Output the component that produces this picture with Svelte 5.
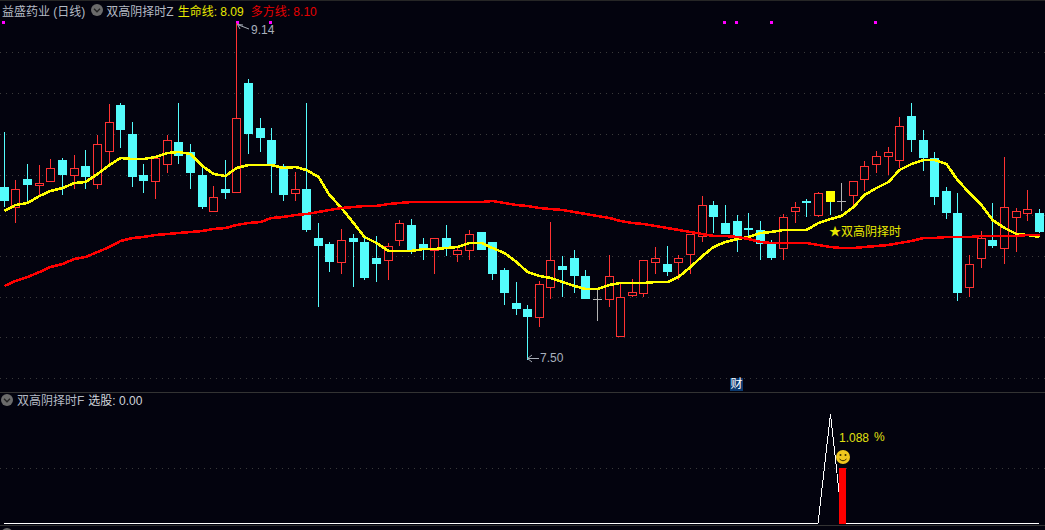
<script lang="ts">
  // type, high, body top, body bottom, low
  const candles: [string, number, number, number, number][] = [
    ['c', 132, 187, 201, 207], ['r', 180, 189, 208, 223], ['c', 164, 179, 185, 201], ['r', 165, 183, 186, 196],
    ['r', 159, 168, 182, 182], ['c', 158, 160, 175, 195], ['r', 155, 168, 176, 189], ['c', 150, 166, 177, 189],
    ['r', 135, 144, 185, 189], ['r', 104, 122, 152, 165], ['c', 103, 105, 130, 148], ['c', 122, 134, 177, 187],
    ['c', 164, 175, 181, 193], ['r', 157, 158, 182, 199], ['r', 135, 140, 165, 173], ['c', 103, 142, 156, 164],
    ['c', 144, 152, 173, 189], ['c', 167, 175, 207, 209], ['r', 186, 197, 212, 212], ['c', 160, 189, 193, 199],
    ['r', 23, 118, 193, 193], ['c', 79, 83, 134, 154], ['c', 118, 128, 138, 152], ['c', 128, 140, 164, 193],
    ['c', 164, 166, 195, 201], ['r', 172, 189, 194, 201], ['c', 103, 189, 230, 232], ['c', 223, 238, 246, 307],
    ['c', 242, 244, 262, 272], ['r', 229, 240, 263, 274], ['c', 234, 238, 242, 287], ['c', 236, 242, 278, 280],
    ['c', 236, 258, 264, 282], ['r', 243, 246, 261, 280], ['r', 220, 223, 241, 246], ['c', 219, 225, 250, 254],
    ['c', 238, 244, 248, 260], ['r', 238, 238, 251, 274], ['c', 225, 238, 248, 256], ['r', 246, 250, 255, 262],
    ['r', 230, 234, 251, 260], ['c', 232, 232, 250, 250], ['c', 242, 242, 274, 280], ['c', 268, 270, 293, 305],
    ['c', 282, 303, 309, 315], ['c', 305, 309, 317, 360], ['r', 281, 284, 318, 327], ['r', 222, 260, 288, 299],
    ['c', 256, 266, 270, 297], ['c', 250, 258, 276, 293], ['c', 270, 276, 299, 299], ['w', 290, 299, 300, 321],
    ['r', 255, 276, 300, 307], ['r', 283, 297, 337, 337], ['r', 279, 292, 296, 297], ['r', 260, 260, 294, 297],
    ['r', 247, 258, 263, 274], ['c', 246, 264, 272, 276], ['r', 255, 258, 263, 280], ['r', 234, 234, 255, 274],
    ['r', 196, 205, 237, 242], ['c', 201, 205, 217, 233], ['c', 205, 223, 234, 234], ['c', 215, 221, 236, 252],
    ['c', 213, 228, 230, 240], ['c', 221, 230, 244, 260], ['c', 240, 244, 258, 260], ['r', 214, 217, 249, 260],
    ['r', 202, 207, 212, 223], ['c', 199, 201, 203, 217], ['r', 192, 193, 216, 217], ['y', 191, 191, 202, 215],
    ['w', 183, 201, 202, 211], ['r', 181, 181, 196, 205], ['r', 161, 166, 180, 191], ['r', 151, 156, 165, 173],
    ['r', 147, 152, 157, 175], ['r', 117, 126, 161, 168], ['c', 103, 116, 140, 152], ['c', 130, 140, 158, 171],
    ['c', 152, 158, 197, 205], ['c', 187, 191, 213, 219], ['c', 193, 213, 293, 301], ['r', 255, 264, 288, 297],
    ['r', 231, 238, 259, 268], ['c', 203, 240, 246, 248], ['r', 157, 207, 249, 264], ['r', 208, 211, 218, 252],
    ['r', 190, 209, 214, 221], ['c', 209, 213, 232, 233]
  ];

  const lifeLine = [
    211, 205, 203, 196, 191, 188, 183, 182, 174, 165, 158, 159, 159, 157, 153, 152, 154, 166, 174, 176,
    168, 165, 165, 165, 168, 167, 170, 177, 195, 208, 223, 237, 243, 251, 251, 251, 249, 249, 248, 247,
    243, 243, 248, 253, 262, 272, 276, 278, 282, 286, 289, 289, 285, 283, 283, 283, 282, 282, 277, 267,
    256, 247, 242, 239, 237, 233, 232, 230, 230, 230, 223, 219, 216, 207, 195, 188, 182, 170, 164, 160,
    160, 164, 180, 193, 205, 220, 228, 234, 235, 237
  ];

  const trendLine = [
    286, 281, 277, 272, 267, 264, 259, 257, 252, 247, 241, 238, 237, 235, 234, 233, 232, 231, 229, 228,
    225, 223, 222, 218, 217, 215, 214, 212, 210, 208, 207, 206, 206, 204, 203, 202, 202, 202, 202, 202,
    202, 202, 201, 203, 205, 206, 208, 209, 210, 212, 214, 216, 218, 221, 223, 224, 226, 228, 230, 232,
    234, 236, 236, 237, 239, 242, 243, 243, 243, 243, 245, 247, 248, 248, 247, 246, 245, 243, 241, 238,
    238, 237, 237, 237, 236, 236, 236, 236, 235, 235
  ];

  const mainGrid = [52, 93, 134, 175, 215, 256, 297, 337, 378];
  const signals = [3, 237, 270, 724, 736, 771, 875];

  const xAt = (i: number) => Math.floor(4.33 + 11.63 * i);
  const toPoints = (ys: number[]) => ys.map((y, i) => `${xAt(i) + 0.5},${y}`).join(' ');
</script>

{#snippet toggle()}
  <svg class="toggle" viewBox="0 0 12 12" width="12" height="12">
    <circle cx="6" cy="6" r="6" fill="#6b6b6b" />
    <path d="M3 4.8 6 7.8 9 4.8" fill="none" stroke="#222" stroke-width="1.3" />
  </svg>
{/snippet}

<div class="page">
  <section class="pane main">
    <svg class="canvas" viewBox="0 0 1045 392" width="1045" height="392">
      <g shape-rendering="crispEdges">
        {#each mainGrid as y}
          <line class="grid" x1="0" x2="1045" y1={y + 0.5} y2={y + 0.5} />
        {/each}
        {#each signals as x}
          <rect x={x - 1} y="21" width="3" height="3" fill="#ff00ff" />
        {/each}
        {#each candles as [kind, high, top, bottom, low], i}
          {@const x = xAt(i)}
          <g class={kind}>
            <line class="wick" x1={x + 0.5} x2={x + 0.5} y1={high} y2={top} />
            <line class="wick" x1={x + 0.5} x2={x + 0.5} y1={bottom} y2={low} />
            {#if kind === 'r'}
              <rect class="body" x={x - 3.5} y={top + 0.5} width="8" height={bottom - top - 1} />
            {:else if kind === 'w'}
              <line class="wick" x1={x - 4} x2={x + 5} y1={top + 0.5} y2={top + 0.5} />
              <line class="wick" x1={x + 0.5} x2={x + 0.5} y1={high} y2={low} />
            {:else}
              <rect class="body" x={x - 4} y={top} width="9" height={bottom - top} />
            {/if}
          </g>
        {/each}
      </g>
      <polyline class="life" points={toPoints(lifeLine)} shape-rendering="crispEdges" />
      <polyline class="trend" points={toPoints(trendLine)} shape-rendering="crispEdges" />

      <path class="arrow" d="M237.5 24.5 249 29M237.5 24.5 243 25M237.5 24.5 240 29" />
      <text class="price" x="251" y="34">9.14</text>
      <path class="arrow" d="M527.5 358.5H539M527.5 358.5 532 355M527.5 358.5 532 362" />
      <text class="price" x="540" y="362">7.50</text>
      <text class="signal" x="829" y="236">★双高阴择时</text>
    </svg>

    <div class="legend">
      <span class="title">益盛药业 (日线)</span>
      {@render toggle()}
      <span class="name">双高阴择时Z</span>
      <span class="yellow">生命线: 8.09</span>
      <span class="red">多方线: 8.10</span>
    </div>
    <span class="badge">财</span>
  </section>

  <section class="pane sub">
    <svg class="canvas" viewBox="0 393 1045 132" width="1045" height="132">
      <line class="grid" x1="0" x2="1045" y1="468.5" y2="468.5" shape-rendering="crispEdges" />
      <polyline class="volume" points="4,523.5 818,523.5 830.5,414 842.5,523.5 1039,523.5" shape-rendering="crispEdges" />
      <rect x="839" y="468" width="7" height="56" fill="#ff0000" />
      <text class="gain" x="839" y="442">1.088</text>
      <text class="gain" x="874" y="441">%</text>
      <circle cx="843" cy="457" r="7" fill="#f0c71e" />
      <circle cx="840.5" cy="455" r="1" fill="#3a2c00" />
      <circle cx="845.5" cy="455" r="1" fill="#3a2c00" />
      <path d="M839.5 459q3.5 3.5 7 0" fill="none" stroke="#3a2c00" stroke-width="1" />
    </svg>

    <div class="legend sub-legend">
      {@render toggle()}
      <span class="name">双高阴择时F</span>
      <span class="light">选股: 0.00</span>
    </div>
  </section>

  <section class="tail">
    {@render toggle()}
    <span class="name">MACD(12,26,9)</span>
    <span class="white">DIF: 0.01</span>
    <span class="yellow">DEA: 0.03</span>
    <span class="magenta">MACD: 0.03</span>
  </section>
</div>

<style>
  :global(body) {
    margin: 0;
    background: #03030e;
  }

  .page {
    display: flex;
    flex-direction: column;
    width: 1045px;
    height: 530px;
    overflow: hidden;
    background: #03030e;
    font-family: "Liberation Sans", "Noto Sans CJK SC", sans-serif;
    font-size: 12px;
    color: #b4bac4;
  }

  .pane {
    position: relative;
    flex: none;
    border-bottom: 1px solid #333;
  }

  .main {
    height: 392px;
    box-shadow: inset 0 1px #262626;
  }

  .sub {
    height: 132px;
  }

  .canvas {
    position: absolute;
    left: 0;
    top: 0;
    display: block;
  }

  .legend {
    position: relative;
    display: flex;
    align-items: center;
    height: 20px;
    padding-left: 2px;
    white-space: nowrap;
  }

  .toggle {
    flex: none;
    margin: 0 3px 0 6px;
  }

  .yellow {
    margin-left: 4px;
    color: #e8e800;
  }

  .red {
    margin-left: 7px;
    color: #e60000;
  }

  .sub-legend {
    height: 13px;
    padding-left: 0;
  }

  .sub-legend .toggle {
    margin: 0 4px 0 1px;
  }

  .light {
    margin-left: 4px;
    color: #d0d4da;
  }

  .badge {
    position: absolute;
    left: 730px;
    top: 378px;
    width: 13px;
    height: 13px;
    line-height: 13px;
    text-align: center;
    background: #0b3a70;
    color: #fff;
  }

  .tail {
    display: flex;
    align-items: flex-start;
    gap: 6px;
    padding-top: 2px;
    white-space: nowrap;
  }

  .tail .toggle {
    margin: 0 0 0 1px;
  }

  .white {
    color: #fff;
  }

  .tail .yellow {
    margin-left: 0;
    color: #ffff00;
  }

  .magenta {
    color: #ff00ff;
  }

  .grid {
    stroke: #3a3a3a;
    stroke-width: 1;
    stroke-dasharray: 1 5;
  }

  .wick {
    stroke-width: 1;
  }

  .c .wick {
    stroke: #54fcfc;
  }

  .c .body {
    fill: #54fcfc;
  }

  .r .wick {
    stroke: #ff3232;
  }

  .r .body {
    fill: #03030e;
    stroke: #ff3232;
    stroke-width: 1;
  }

  .w .wick {
    stroke: #b4b4b4;
  }

  .y .wick {
    stroke: #54fcfc;
  }

  .y .body {
    fill: #ffff00;
  }

  .life,
  .trend,
  .volume {
    fill: none;
  }

  .life {
    stroke: #ffff00;
    stroke-width: 2.6;
  }

  .trend {
    stroke: #ff0000;
    stroke-width: 2.6;
  }

  .volume {
    stroke: #ffffff;
    stroke-width: 1;
  }

  .arrow {
    fill: none;
    stroke: #a8aeb8;
    stroke-width: 1;
  }

  .price {
    fill: #a8b0bc;
  }

  .signal {
    fill: #e8e800;
  }

  .gain {
    fill: #e0e010;
  }

  text {
    font-size: 12px;
  }
</style>
